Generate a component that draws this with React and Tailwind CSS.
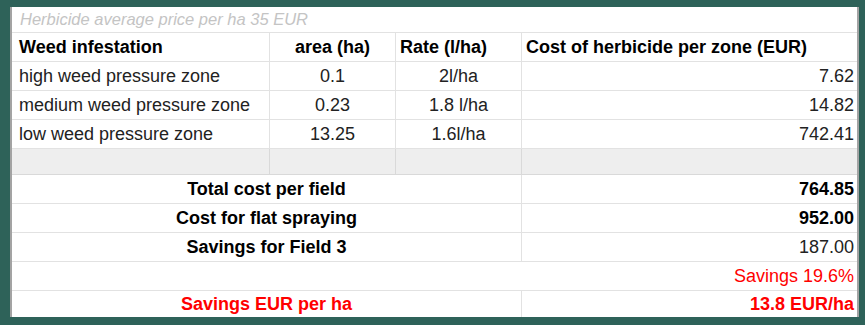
const rows = [
  { name: "high weed pressure zone", area: "0.1", rate: "2l/ha", cost: "7.62" },
  { name: "medium weed pressure zone", area: "0.23", rate: "1.8 l/ha", cost: "14.82" },
  { name: "low weed pressure zone", area: "13.25", rate: "1.6l/ha", cost: "742.41" },
];

const cell = "border-b border-r border-[#e2e2e2] flex items-center";

const App = () => {
  return (
    <div
      className="w-[865px] h-[325px] bg-[#2e6259] pt-[7px] pl-[10px]"
      style={{ fontFamily: '"Liberation Sans", Arial, sans-serif' }}
    >
      <div className="w-[849px] h-[310px] bg-white border-l-2 border-r-2 border-[#a3a3a3]">
        <div className="grid grid-cols-[258px_126px_126px_335px] text-[18px] text-[#222]">
          {/* title */}
          <div className="col-span-4 h-[26px] border-b border-[#e2e2e2] flex items-center pl-[8px] italic text-[16.5px] text-[#c4c4c4]">
            Herbicide average price per ha 35 EUR
          </div>

          {/* header */}
          <div className={`${cell} h-[29px] pl-[7px] font-bold text-black`}>Weed infestation</div>
          <div className={`${cell} h-[29px] justify-center font-bold text-black`}>area (ha)</div>
          <div className={`${cell} h-[29px] pl-[4px] font-bold text-black`}>Rate (l/ha)</div>
          <div className="h-[29px] border-b border-[#e2e2e2] flex items-center pl-[4px] font-bold text-black">
            Cost of herbicide per zone (EUR)
          </div>

          {rows.map((r) => (
            <div key={r.name} className="contents">
              <div className={`${cell} h-[29px] pl-[7px]`}>{r.name}</div>
              <div className={`${cell} h-[29px] justify-center`}>{r.area}</div>
              <div className={`${cell} h-[29px] justify-center`}>{r.rate}</div>
              <div className="h-[29px] border-b border-[#e2e2e2] flex items-center justify-end pr-[3px]">{r.cost}</div>
            </div>
          ))}

          {/* grey spacer row */}
          <div className="h-[26px] bg-[#eeeeee] border-b border-r border-[#d9d9d9]"></div>
          <div className="h-[26px] bg-[#eeeeee] border-b border-r border-[#d9d9d9]"></div>
          <div className="h-[26px] bg-[#eeeeee] border-b border-r border-[#d9d9d9]"></div>
          <div className="h-[26px] bg-[#eeeeee] border-b border-[#d9d9d9]"></div>

          {/* totals */}
          <div className={`${cell} col-span-3 h-[29px] justify-center font-bold text-black`}>Total cost per field</div>
          <div className="h-[29px] border-b border-[#e2e2e2] flex items-center justify-end pr-[3px] font-bold text-black">764.85</div>

          <div className={`${cell} col-span-3 h-[29px] justify-center font-bold text-black`}>Cost for flat spraying</div>
          <div className="h-[29px] border-b border-[#e2e2e2] flex items-center justify-end pr-[3px] font-bold text-black">952.00</div>

          <div className={`${cell} col-span-3 h-[29px] justify-center font-bold text-black`}>Savings for Field 3</div>
          <div className="h-[29px] border-b border-[#e2e2e2] flex items-center justify-end pr-[3px]">187.00</div>

          <div className="col-span-4 h-[29px] border-b border-[#e2e2e2] flex items-center justify-end pr-[3px] text-[#ff0000]">
            Savings 19.6%
          </div>

          <div className="col-span-3 h-[26px] border-r border-[#e2e2e2] flex items-center justify-center font-bold text-[#ff0000]">
            Savings EUR per ha
          </div>
          <div className="h-[26px] flex items-center justify-end pr-[3px] font-bold text-[#ff0000]">13.8 EUR/ha</div>
        </div>
      </div>
    </div>
  );
};

export default App;
